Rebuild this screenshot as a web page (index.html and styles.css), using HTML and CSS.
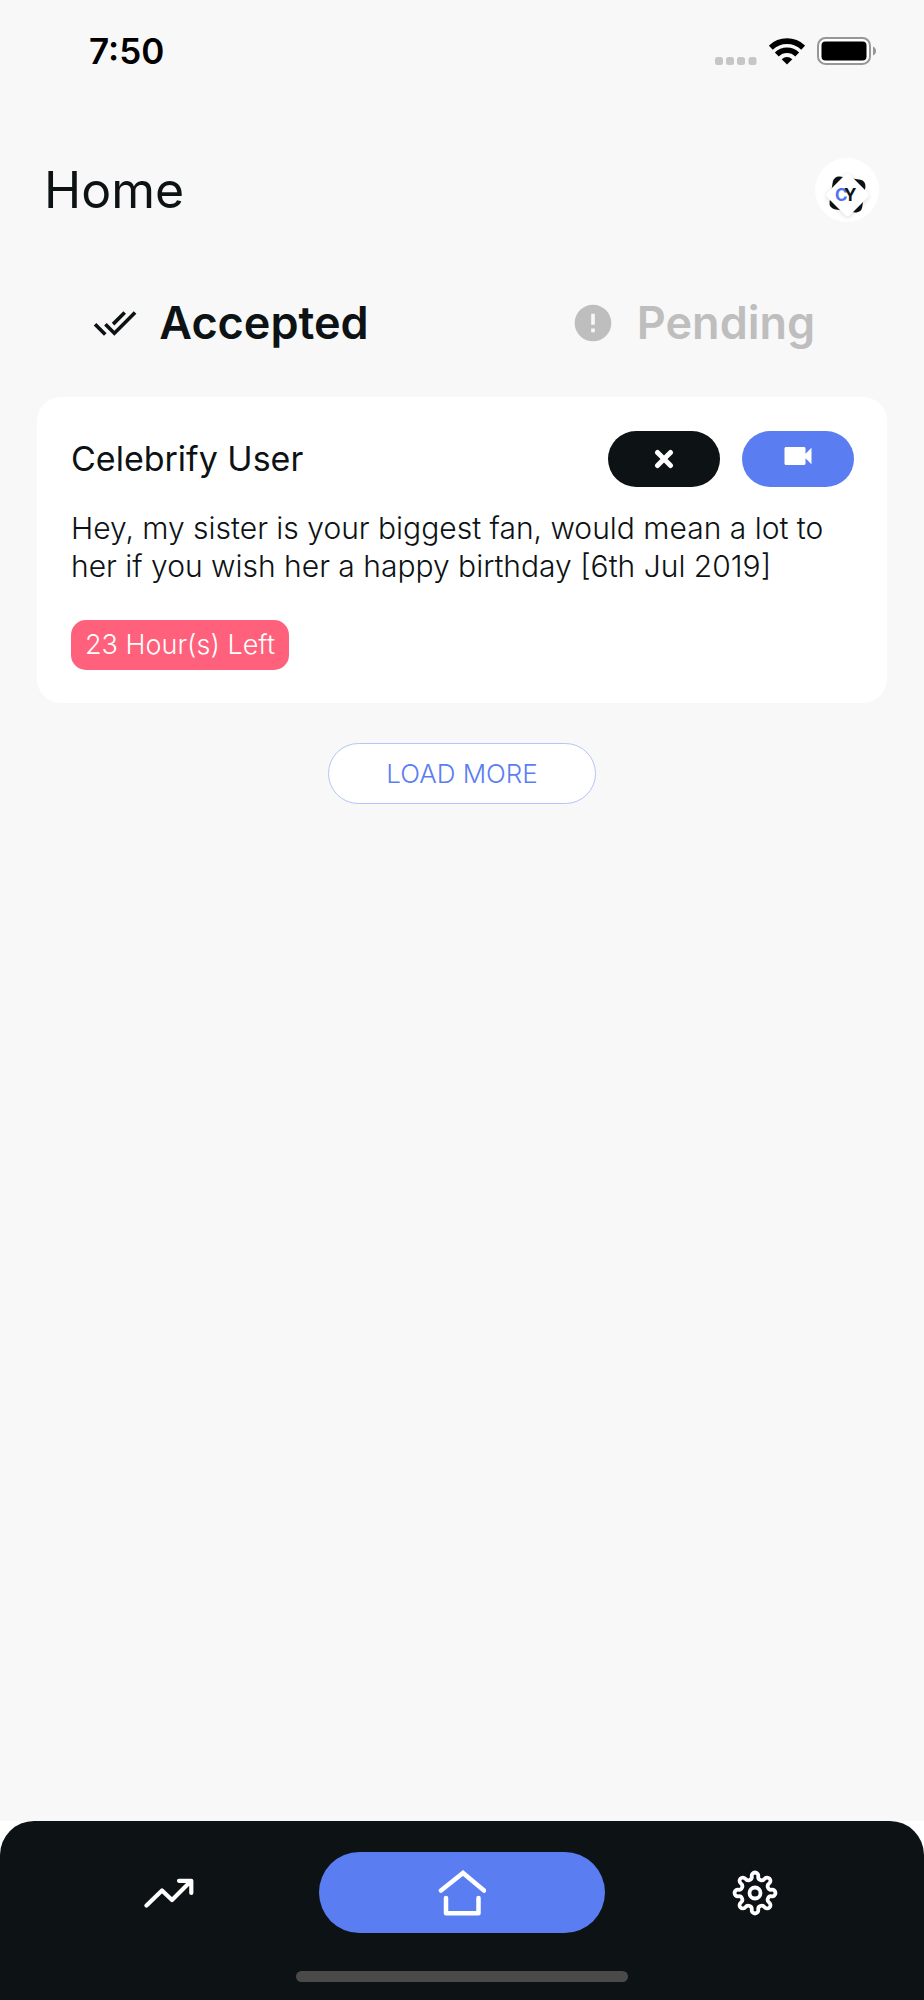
FILE: index.html
```html
<!DOCTYPE html>
<html lang="en">
<head>
<meta charset="utf-8">
<meta name="viewport" content="width=device-width, initial-scale=1">
<title>Home</title>
<link rel="stylesheet" href="styles.css">
</head>
<body>
<div class="screen">
  <div class="status">
    <span class="time">7:50</span>
    <div class="status-icons">
      <svg class="signal" width="42" height="8" viewBox="0 0 42 8" fill="#c6c6c6"><rect width="8" height="8" rx="2.5"/><rect x="11" width="8" height="8" rx="2.5"/><rect x="22" width="8" height="8" rx="2.5"/><rect x="33.500" width="8" height="8" rx="2.5"/></svg>
      <svg width="36" height="27" viewBox="0 0 36 27"><g fill="none" stroke="#000" stroke-width="5.600"><path d="M1.800 9.600A23.500 23.500 0 0 1 34.200 9.600"/><path d="M7.800 16.400A14.600 14.600 0 0 1 28.200 16.400"/></g><path d="M12.700 21.200Q18 16.600 23.300 21.200L18 26.600Z"/></svg>
      <svg width="60" height="28" viewBox="0 0 60 28"><rect x="1" y="1" width="52" height="26" rx="7.500" fill="#fff" stroke="#979797" stroke-width="2"/><rect x="4.500" y="4.500" width="45" height="19" rx="4"/><path d="M56 9.500Q59 11 59 14T56 18.500Z" fill="#979797"/></svg>
    </div>
  </div>

  <header class="header">
    <h1 class="title">Home</h1>
    <button class="avatar" aria-label="Profile">
      <svg width="64" height="64" viewBox="0 0 64 64">
        <rect x="16" y="20" width="33" height="33" rx="6" fill="#0d1214" transform="rotate(9 32.500 36.500)"/>
        <g class="logo-tile"><rect x="16.500" y="21" width="32" height="32" rx="4" fill="#fff" transform="rotate(45 32.500 37)"/></g>
        <text class="logo-text" x="20" y="43" fill="#4f70f2">C</text>
        <text class="logo-text" x="29" y="43" fill="#0d1214">Y</text>
      </svg>
    </button>
  </header>

  <div class="tabs" role="tablist">
    <button class="tab tab-active" role="tab" aria-selected="true">
      <svg width="44" height="44" viewBox="0 0 24 24" fill="currentColor"><path d="M18 7l-1.410-1.410-6.340 6.340 1.410 1.410L18 7zm4.240-1.410L11.660 16.170 7.480 12l-1.410 1.410L11.660 19l12-12-1.420-1.410zM.41 13.410L6 19l1.410-1.410L1.830 12 .41 13.410z"/></svg>
      <span>Accepted</span>
    </button>
    <button class="tab" role="tab" aria-selected="false">
      <svg width="44" height="44" viewBox="0 0 24 24" fill="currentColor"><path d="M12 2C6.480 2 2 6.480 2 12s4.480 10 10 10 10-4.480 10-10S17.520 2 12 2zm1 15h-2v-2h2v2zm0-4h-2V7h2v6z"/></svg>
      <span>Pending</span>
    </button>
  </div>

  <main class="content">
    <article class="card">
      <div class="card-head">
        <h2 class="name">Celebrify User</h2>
        <div class="actions">
          <button class="action action-reject" aria-label="Decline"><svg width="20" height="20" viewBox="0 0 20 20" fill="none" stroke="#fff" stroke-width="5" stroke-linecap="round"><path d="M3.500 3.500l13 13M16.500 3.500l-13 13"/></svg></button>
          <button class="action action-record" aria-label="Record video"><svg width="36" height="36" viewBox="0 0 24 24" fill="#fff"><path d="M17 10.500V7c0-.55-.45-1-1-1H4c-.55 0-1 .45-1 1v10c0 .55.45 1 1 1h12c.55 0 1-.45 1-1v-3.500l4 4v-11l-4 4z"/></svg></button>
        </div>
      </div>
      <p class="message">Hey, my sister is your biggest fan, would mean a lot to her if you wish her a happy birthday [6th Jul 2019]</p>
      <span class="badge">23 Hour(s) Left</span>
    </article>
    <button class="load-more">LOAD MORE</button>
  </main>

  <footer class="footer">
    <div class="dock">
      <nav class="nav">
        <a class="nav-item" href="#trends" aria-label="Trends"><svg width="50" height="30" viewBox="0 0 50 30" fill="none" stroke="#fff" stroke-width="4.200" stroke-linecap="round" stroke-linejoin="round"><path d="M2.500 27.500L18 12.500L28 22L47 3M35 2.800H47.300V15"/></svg></a>
        <a class="nav-item nav-active" href="#home" aria-label="Home" aria-current="page"><svg width="48" height="46" viewBox="0 0 48 46" fill="none" stroke="#fff" stroke-width="4.500" stroke-linecap="round" stroke-linejoin="miter"><path d="M3 20.500L25 3L46 20.500"/><path d="M8 28V43.300H40.500V28" stroke-linejoin="round"/></svg></a>
        <a class="nav-item" href="#settings" aria-label="Settings"><svg width="48" height="48" viewBox="0 0 48 48" fill="none" stroke="#fff" stroke-width="3.800"><path d="M20.740 7.320A3.300 3.300 0 1 1 27.260 7.320A3.470 3.470 0 0 0 33.490 9.900A3.300 3.300 0 1 1 38.100 14.510A3.470 3.470 0 0 0 40.680 20.740A3.300 3.300 0 1 1 40.680 27.260A3.470 3.470 0 0 0 38.100 33.490A3.300 3.300 0 1 1 33.490 38.100A3.470 3.470 0 0 0 27.260 40.680A3.300 3.300 0 1 1 20.740 40.680A3.470 3.470 0 0 0 14.510 38.100A3.300 3.300 0 1 1 9.900 33.490A3.470 3.470 0 0 0 7.320 27.260A3.300 3.300 0 1 1 7.320 20.740A3.470 3.470 0 0 0 9.900 14.510A3.300 3.300 0 1 1 14.510 9.900A3.470 3.470 0 0 0 20.740 7.320Z"/><circle cx="24" cy="24" r="5.500"/></svg></a>
      </nav>
      <div class="home-bar"></div>
    </div>
  </footer>
</div>
</body>
</html>
```
FILE: styles.css
```css
* {
  box-sizing: border-box;
}

body {
  margin: 0;
  background: #f8f8f8;
  color: #0d1214;
  font-family: Inter, "Liberation Sans", sans-serif;
}

button {
  margin: 0;
  padding: 0;
  border: 0;
  background: none;
  font-family: inherit;
  cursor: pointer;
}

svg {
  display: block;
}

h1, h2, p {
  margin: 0;
}

.screen {
  display: flex;
  flex-direction: column;
  min-height: 100vh;
}

.status {
  display: flex;
  justify-content: space-between;
  align-items: center;
  height: 102px;
  padding: 0 47px 0 89px;
}

.time {
  font-size: 35px;
  font-weight: 600;
  line-height: 40px;
  color: #000;
}

.status-icons {
  display: flex;
  align-items: center;
  gap: 12px;
}

.signal {
  align-self: flex-end;
}

.header {
  display: flex;
  justify-content: space-between;
  align-items: center;
  height: 176px;
  padding: 0 45px 0 44px;
}

.title {
  font-size: 50px;
  font-weight: 400;
  line-height: 64px;
}

.avatar {
  width: 64px;
  height: 64px;
  border-radius: 50%;
  background: #fff;
}

.logo-tile {
  filter: drop-shadow(0 1px 2px rgba(0, 0, 0, 0.15));
}

.logo-text {
  font-family: Inter, sans-serif;
  font-size: 17px;
  font-weight: 700;
}

.tabs {
  display: grid;
  grid-template-columns: 1fr 1fr;
  padding-bottom: 41px;
}

.tab {
  display: flex;
  justify-content: center;
  align-items: center;
  gap: 22px;
  height: 78px;
  padding-top: 12px;
  color: #bebebe;
  font-size: 45px;
  font-weight: 600;
  line-height: 56px;
}

.tab-active {
  color: #0d1214;
}

.content {
  display: flex;
  flex: 1;
  flex-direction: column;
  align-items: center;
  gap: 40px;
  padding: 0 37px 40px;
}

.card {
  width: 100%;
  padding: 34px 33px 33px 34px;
  border-radius: 24px;
  background: #fff;
}

.card-head {
  display: flex;
  justify-content: space-between;
  align-items: center;
}

.name {
  font-size: 34px;
  font-weight: 400;
  line-height: 40px;
}

.actions {
  display: flex;
  gap: 22px;
}

.action {
  display: flex;
  justify-content: center;
  align-items: center;
  width: 112px;
  height: 56px;
  border-radius: 28px;
}

.action-reject {
  background: #0d1214;
}

.action-record {
  padding-bottom: 6px;
  background: #5a7ef2;
}

.message {
  margin-top: 22px;
  font-size: 30px;
  font-weight: 300;
  line-height: 38px;
}

.badge {
  display: block;
  width: fit-content;
  margin-top: 35px;
  padding: 0 14px;
  border-radius: 15px;
  background: #ff607b;
  color: #fff;
  font-size: 27px;
  font-weight: 300;
  line-height: 50px;
}

.load-more {
  height: 61px;
  width: 268px;
  border: 1px solid #b4c4fa;
  border-radius: 31px;
  background: #fff;
  color: #5a7ef2;
  font-size: 26px;
  font-weight: 300;
}

.footer {
  background: #fff;
}

.dock {
  display: flex;
  flex-direction: column;
  align-items: center;
  gap: 38px;
  padding: 31px 26px 18px;
  border-radius: 34px 34px 0 0;
  background: #0d1214;
}

.nav {
  display: grid;
  grid-template-columns: repeat(3, 1fr);
  gap: 6px;
  width: 100%;
}

.nav-item {
  display: flex;
  justify-content: center;
  align-items: center;
  height: 81px;
  border-radius: 41px;
}

.nav-active {
  background: #5a7ef2;
}

.home-bar {
  width: 38%;
  height: 11px;
  border-radius: 6px;
  background: #4a4a4a;
}
```
